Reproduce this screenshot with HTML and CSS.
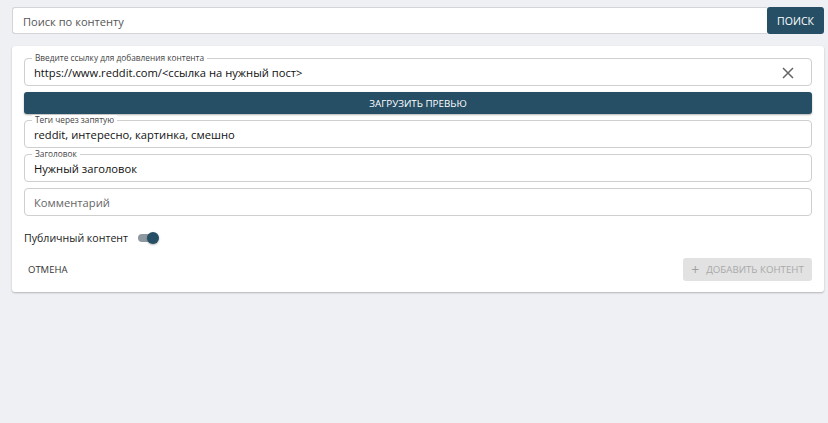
FILE: index.html
```html
<!DOCTYPE html>
<html lang="ru">
<head>
<meta charset="utf-8">
<link rel="stylesheet" href="styles.css">
</head>
<body>
<div class="page">
  <div class="search">
    <div class="search-input">Поиск по контенту</div>
    <button class="search-btn">Поиск</button>
  </div>
  <div class="card">
    <div class="field">
      <span class="label">Введите ссылку для добавления контента</span>
      <span class="value">https://www.reddit.com/&lt;ссылка на нужный пост&gt;</span>
      <svg class="clear" width="12" height="12" viewBox="0 0 12 12"><path d="M1 1 L11 11 M11 1 L1 11" stroke="#666" stroke-width="1.5" fill="none"/></svg>
    </div>
    <button class="primary-btn">Загрузить превью</button>
    <div class="field">
      <span class="label">Теги через запятую</span>
      <span class="value">reddit, интересно, картинка, смешно</span>
    </div>
    <div class="field">
      <span class="label">Заголовок</span>
      <span class="value">Нужный заголовок</span>
    </div>
    <div class="field">
      <span class="placeholder">Комментарий</span>
    </div>
    <div class="toggle-row">
      <span>Публичный контент</span>
      <span class="switch"><span class="track"></span><span class="thumb"></span></span>
    </div>
    <div class="footer">
      <button class="text-btn">Отмена</button>
      <button class="disabled-btn"><span class="plus">+</span>Добавить контент</button>
    </div>
  </div>
</div>
</body>
</html>
```
FILE: styles.css
```css
* { box-sizing: border-box; }
html, body { margin: 0; padding: 0; }
body {
  background: #eff0f4;
  font-family: "Open Sans", "Noto Sans", sans-serif;
  color: #222;
  width: 828px;
  height: 423px;
}
.page {
  padding: 7px 4px 0 12px;
  display: flex;
  flex-direction: column;
  gap: 12px;
}
.search {
  display: flex;
  height: 27px;
}
.search-input {
  flex: 1;
  background: #fff;
  border: 1px solid #d4d4d8;
  border-right: none;
  border-radius: 3px 0 0 3px;
  padding: 1px 10px 0;
  display: flex;
  align-items: center;
  font-size: 11.1px;
  color: #555;
}
.search-btn {
  width: 57px;
  border: none;
  background: #264f66;
  color: #fff;
  font-family: inherit;
  font-size: 10.5px;
  text-transform: uppercase;
  border-radius: 3px;
  padding: 0;
}
.card {
  background: #fff;
  border-radius: 3px;
  box-shadow: 0 1px 2px rgba(0,0,0,0.25);
  padding: 12px 12px 11px;
  display: flex;
  flex-direction: column;
  gap: 6px;
}
.field {
  position: relative;
  height: 28px;
  border: 1px solid #cfcfcf;
  border-radius: 4px;
  display: flex;
  align-items: center;
  padding: 1px 9px 0;
  font-size: 11.2px;
}
.label {
  position: absolute;
  left: 7px;
  top: -6px;
  background: #fff;
  padding: 0 3px;
  font-size: 8.3px;
  line-height: 10px;
  color: #444;
}
.value { color: #111; }
.placeholder { color: #666; }
.clear { margin-left: auto; margin-right: 8px; }
.primary-btn {
  height: 22px;
  border: none;
  background: #264f66;
  color: #fff;
  font-family: inherit;
  font-size: 9.8px;
  text-transform: uppercase;
  border-radius: 3px;
  box-shadow: 0 1px 2px rgba(0,0,0,0.3);
}
.toggle-row {
  margin-top: 6px;
  height: 20px;
  display: flex;
  align-items: center;
  gap: 10px;
  font-size: 10.6px;
  color: #222;
}
.switch {
  position: relative;
  width: 22px;
  height: 14px;
  display: inline-block;
}
.track {
  position: absolute;
  left: 0;
  top: 3px;
  width: 20px;
  height: 8px;
  border-radius: 4px;
  background: #8d98a0;
}
.thumb {
  position: absolute;
  left: 9px;
  top: 1px;
  width: 12px;
  height: 12px;
  border-radius: 50%;
  background: #264f66;
  box-shadow: 0 1px 2px rgba(0,0,0,0.3);
}
.footer {
  margin-top: 4px;
  display: flex;
  justify-content: space-between;
  align-items: center;
  height: 23px;
}
.text-btn {
  border: none;
  background: none;
  font-family: inherit;
  font-size: 9.5px;
  text-transform: uppercase;
  color: #333;
  padding: 0 4px;
}
.disabled-btn {
  height: 23px;
  width: 129px;
  border: none;
  border-radius: 3px;
  background: #e2e2e2;
  color: #a9a9a9;
  font-family: inherit;
  font-size: 9.7px;
  text-transform: uppercase;
  display: flex;
  align-items: center;
  justify-content: center;
  gap: 7px;
  padding: 0;
}
.plus { font-size: 14px; line-height: 1; color: #a0a0a0; }
```
